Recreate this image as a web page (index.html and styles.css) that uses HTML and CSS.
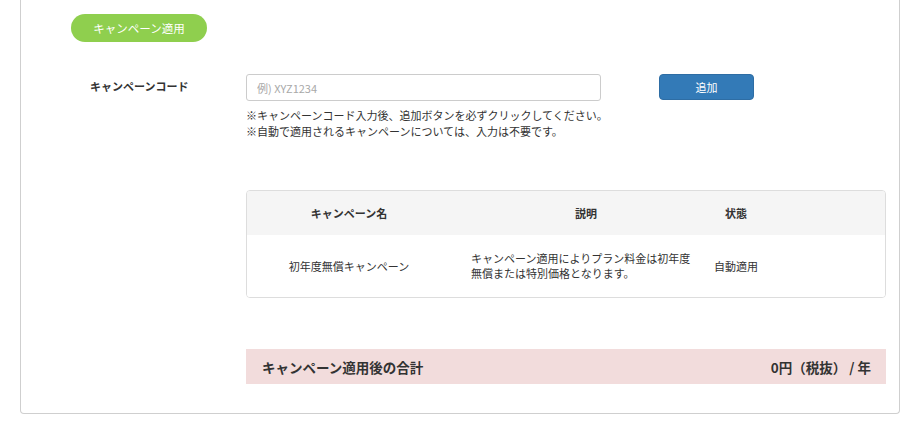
FILE: index.html
```html
<!DOCTYPE html>
<html lang="ja">
<head>
<meta charset="utf-8">
<title>キャンペーン適用</title>
<link rel="stylesheet" href="styles.css">
</head>
<body>
<div class="card">
  <div class="pill">キャンペーン適用</div>
  <div class="form-row">
    <div class="label">キャンペーンコード</div>
    <div class="content">
      <div class="input-line">
        <input class="code-input" type="text" placeholder="例) XYZ1234">
        <button class="add-btn" type="button">追加</button>
      </div>
      <p class="note">※キャンペーンコード入力後、追加ボタンを必ずクリックしてください。<br>※自動で適用されるキャンペーンについては、入力は不要です。</p>
      <div class="table">
        <div class="thead">
          <div class="th c1">キャンペーン名</div>
          <div class="th c2">説明</div>
          <div class="th c3">状態</div>
          <div class="th c4"></div>
        </div>
        <div class="trow">
          <div class="td c1">初年度無償キャンペーン</div>
          <div class="td c2 desc">キャンペーン適用によりプラン料金は初年度無償または特別価格となります。</div>
          <div class="td c3">自動適用</div>
          <div class="td c4"></div>
        </div>
      </div>
      <div class="total">
        <span class="total-label">キャンペーン適用後の合計</span>
        <span class="total-value">0円（税抜） / 年</span>
      </div>
    </div>
  </div>
</div>
</body>
</html>
```
FILE: styles.css
```css
html, body {
  margin: 0;
  padding: 0;
  background: #fff;
}
body {
  font-family: "Noto Sans CJK JP", "Noto Sans", sans-serif;
  font-size: 11px;
  color: #333;
  line-height: 16px;
}
.card {
  margin: 0 22px 0 20px;
  border: 1px solid #cfcfcf;
  border-top: 0;
  border-radius: 0 0 4px 4px;
  padding: 14px 13px 29px 50px;
}
.pill {
  width: 136px;
  height: 28px;
  border-radius: 14px;
  background: #8fcf4e;
  color: #fff;
  font-size: 11.5px;
  line-height: 28px;
  text-align: center;
}
.form-row {
  display: grid;
  grid-template-columns: 175px 1fr;
  margin-top: 32px;
}
.label {
  padding-left: 19px;
  padding-top: 4px;
  font-weight: bold;
  font-size: 11px;
  line-height: 16px;
}
.input-line {
  display: flex;
  align-items: flex-start;
  gap: 58px;
}
.code-input {
  box-sizing: border-box;
  width: 355px;
  height: 27px;
  border: 1px solid #ccc;
  border-radius: 3px;
  padding: 0 10px;
  font-family: "Noto Sans CJK JP", "DejaVu Sans", sans-serif;
  font-size: 11px;
  color: #333;
  outline: none;
}
.code-input::placeholder {
  color: #a8a8a8;
}
.add-btn {
  box-sizing: border-box;
  width: 95px;
  height: 26px;
  border: 1px solid #2e6da4;
  border-radius: 4px;
  background: #337ab7;
  color: #fff;
  font-family: inherit;
  font-size: 11px;
  padding: 0;
}
.note {
  margin: 6px 0 0;
  line-height: 16px;
}
.table {
  margin-top: 51px;
  border: 1px solid #ddd;
  border-radius: 4px;
  overflow: hidden;
}
.thead, .trow {
  display: grid;
  grid-template-columns: 204px 262px 46px 1fr;
}
.thead {
  background: #f5f5f5;
  height: 44px;
  align-items: center;
}
.th {
  font-weight: bold;
  text-align: center;
}
.th.c2 {
  padding-left: 8px;
}
.trow {
  height: 62px;
  align-items: center;
  background: #fff;
}
.td {
  text-align: center;
  white-space: nowrap;
}
.td.desc {
  text-align: left;
  white-space: normal;
  padding: 0 17px 0 20px;
  line-height: 15px;
}
.total {
  margin-top: 51px;
  height: 35px;
  background: #f2dcdc;
  display: flex;
  align-items: center;
  justify-content: space-between;
  padding: 0 15px 0 16px;
  font-size: 13.5px;
  font-weight: bold;
}
```
